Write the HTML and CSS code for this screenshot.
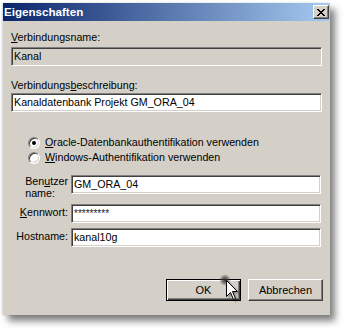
FILE: index.html
```html
<!DOCTYPE html>
<html>
<head>
<meta charset="utf-8">
<link rel="stylesheet" href="styles.css">
</head>
<body>
<div class="dialog">
  <div class="titlebar">
    <span class="title">Eigenschaften</span>
    <span class="close">
      <svg width="8" height="7" viewBox="0 0 8 7"><path d="M0 0h2v1H0zM6 0h2v1H6zM1 1h2v1H1zM5 1h2v1H5zM2 2h4v1H2zM3 3h2v1H3zM2 4h4v1H2zM1 5h2v1H1zM5 5h2v1H5zM0 6h2v1H0zM6 6h2v1H6z" fill="#000"/></svg>
    </span>
  </div>
  <div class="content">
    <div class="label l1"><u>V</u>erbindungsname:</div>
    <div class="field readonly f1">Kanal</div>
    <div class="label l2">Verbindungs<u>b</u>eschreibung:</div>
    <div class="field f2">Kanaldatenbank Projekt GM_ORA_04</div>
    <div class="radios">
      <div class="radio"><span class="circle checked"></span><span><u>O</u>racle-Datenbankauthentifikation verwenden</span></div>
      <div class="radio"><span class="circle"></span><span><u>W</u>indows-Authentifikation verwenden</span></div>
    </div>
    <div class="form">
      <div class="flabel two">Ben<u>u</u>tzer<br>name:</div>
      <div class="field">GM_ORA_04</div>
      <div class="flabel"><u>K</u>ennwort:</div>
      <div class="field pw">*********</div>
      <div class="flabel">Hostname:</div>
      <div class="field">kanal10g</div>
    </div>
    <div class="buttons">
      <div class="btn default">OK</div>
      <div class="btn">Abbrechen</div>
    </div>
  </div>
</div>
<div class="sparkle"></div>
<svg class="cursor" width="13" height="21" viewBox="0 0 13 21">
  <path d="M0.5 0.5V16.5L4.5 12.5L7.5 19.5L9.5 18.5L6.5 11.5H11.5Z" fill="#fff" stroke="#000" stroke-width="1" stroke-linejoin="miter"/>
</svg>
</body>
</html>
```

FILE: styles.css
```css
html, body {
  margin: 0;
  padding: 0;
  background: #fff;
}
body {
  width: 347px;
  height: 329px;
  overflow: hidden;
  position: relative;
  font-family: "Liberation Sans", Arial, sans-serif;
  font-size: 10.7px;
  color: #000;
}
u { text-decoration: underline; text-underline-offset: 1px; }
.dialog {
  margin: 3px 0 0 3px;
  width: 327px;
  background: #d4d0c8;
  box-shadow: 5px 6px 7px rgba(0, 0, 0, 0.5), -1px 0 2px rgba(0,0,0,0.15);
}
.titlebar {
  height: 18px;
  display: flex;
  align-items: center;
  justify-content: space-between;
  background: linear-gradient(to right, #0a246a, #a6caf0);
  padding: 0 1px 0 1px;
}
.title {
  color: #fff;
  font-weight: bold;
  font-size: 11.6px;
  line-height: 18px;
}
.close {
  width: 16px;
  height: 14px;
  box-sizing: border-box;
  background: #d4d0c8;
  border: 1px solid;
  border-color: #fff #404040 #404040 #fff;
  box-shadow: inset -1px -1px #808080;
  display: flex;
  align-items: center;
  justify-content: center;
}
.close svg { display: block; shape-rendering: crispEdges; }
.content {
  padding: 0 8px 14px 8px;
}
.label {
  line-height: 13px;
  height: 13px;
}
.l1 { margin-top: 10px; }
.l2 { margin-top: 13px; }
.field {
  box-sizing: border-box;
  height: 19px;
  background: #fff;
  border: 1px solid;
  border-color: #808080 #fff #fff #808080;
  box-shadow: inset 1px 1px #404040, inset -1px -1px #d4d0c8;
  padding: 0 2px;
  line-height: 17px;
  white-space: nowrap;
  overflow: hidden;
}
.readonly { background: #d4d0c8; }
.f1 { margin-top: 3px; }
.f2 { margin-top: 1px; }
.radios {
  margin-top: 23px;
  padding-left: 17px;
}
.radio {
  display: flex;
  align-items: center;
  gap: 5px;
  height: 15px;
  line-height: 15px;
}
.circle {
  width: 12px;
  height: 12px;
  box-sizing: border-box;
  border-radius: 50%;
  background: #fff;
  border: 1px solid;
  border-color: #808080 #fff #fff #808080;
  box-shadow: inset 1px 1px #404040, inset -1px -1px #d4d0c8;
  position: relative;
}
.circle.checked::after {
  content: "";
  position: absolute;
  left: 3px;
  top: 3px;
  width: 4px;
  height: 4px;
  border-radius: 50%;
  background: #000;
}
.form {
  margin-top: 10px;
  display: grid;
  grid-template-columns: 57px 250px;
  column-gap: 3px;
  row-gap: 5px;
}
.flabel {
  justify-self: end;
  align-self: center;
  line-height: 13px;
  padding-bottom: 3px;
}
.flabel.two {
  text-align: left;
  line-height: 12px;
  align-self: end;
  padding-bottom: 0;
}
.pw { font-size: 10px; color: #222; }
.buttons {
  margin-top: 32px;
  margin-right: -1px;
  display: flex;
  justify-content: flex-end;
  gap: 7px;
}
.btn {
  box-sizing: border-box;
  width: 75px;
  height: 22px;
  border: 1px solid;
  border-color: #fff #404040 #404040 #fff;
  box-shadow: inset -1px -1px #808080;
  display: flex;
  align-items: center;
  justify-content: center;
  font-size: 11px;
}
.btn.default {
  border: 1px solid #000;
  box-shadow: inset 1px 1px #fff, inset -1px -1px #404040, inset -2px -2px #808080;
}
.sparkle {
  position: absolute;
  left: 219px;
  top: 274px;
  width: 12px;
  height: 12px;
  border-radius: 50%;
  background: radial-gradient(circle, rgba(40,40,40,0.95) 0, rgba(60,60,60,0.6) 35%, rgba(100,100,100,0) 70%);
}
.cursor {
  position: absolute;
  left: 226px;
  top: 280px;
  filter: drop-shadow(2px 2px 1px rgba(0,0,0,0.3));
}
```
